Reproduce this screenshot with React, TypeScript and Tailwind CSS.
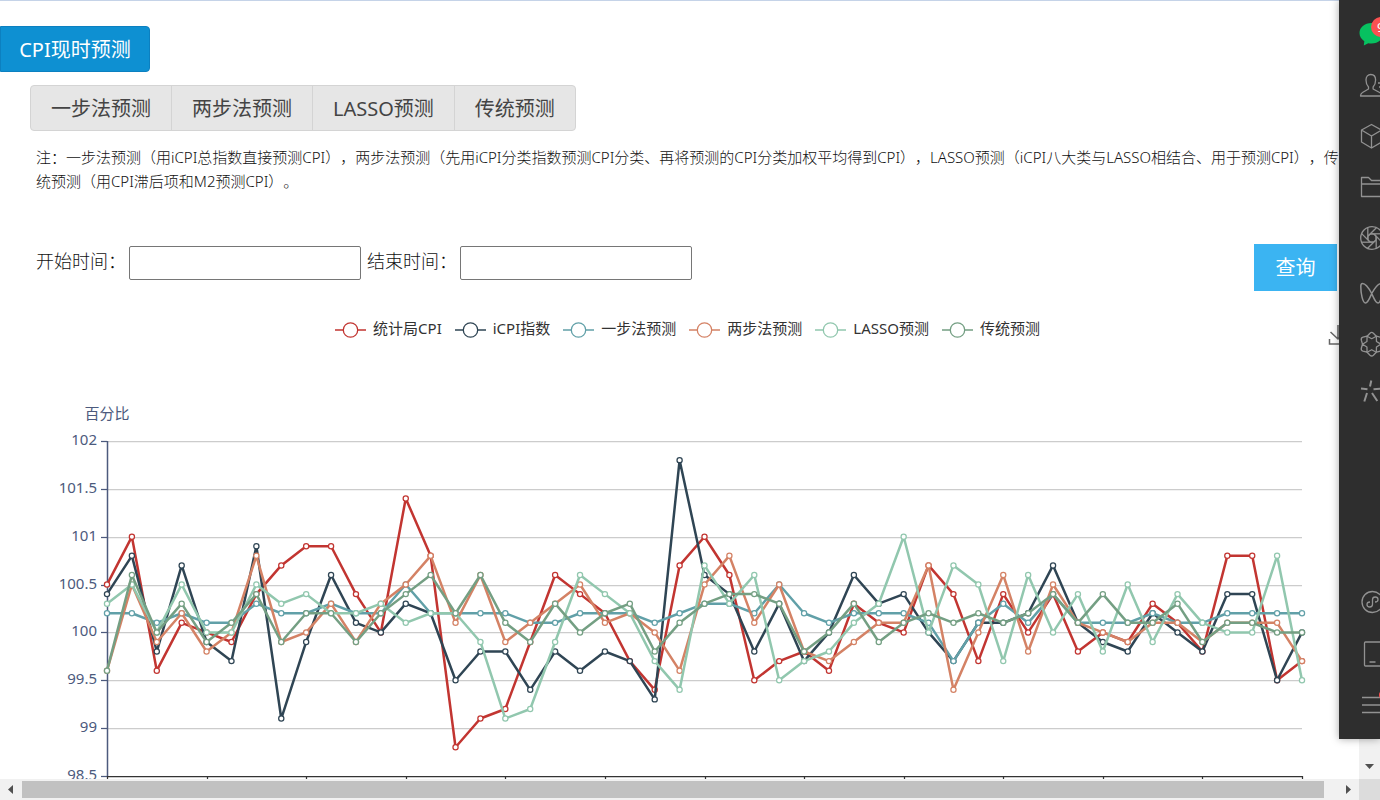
import { useState } from 'react'
import type { ReactNode } from 'react'

const series = [
  {
    name: '统计局CPI',
    color: '#c23531',
    data: [
      100.5, 101, 99.6, 100.1, 100, 99.9, 100.4, 100.7, 100.9, 100.9, 100.4, 100, 101.4, 100.8, 98.8, 99.1, 99.2,
      99.9, 100.6, 100.4, 100.2, 99.7, 99.4, 100.7, 101, 100.6, 99.5, 99.7, 99.8, 99.6, 100.3, 100.1, 100, 100.7,
      100.4, 99.7, 100.4, 100, 100.4, 99.8, 100, 99.9, 100.3, 100.1, 99.8, 100.8, 100.8, 99.5, 99.7,
    ],
  },
  {
    name: 'iCPI指数',
    color: '#2f4554',
    data: [
      100.4, 100.8, 99.8, 100.7, 99.9, 99.7, 100.9, 99.1, 99.9, 100.6, 100.1, 100, 100.3, 100.2, 99.5, 99.8, 99.8,
      99.4, 99.8, 99.6, 99.8, 99.7, 99.3, 101.8, 100.6, 100.4, 99.8, 100.3, 99.7, 100, 100.6, 100.3, 100.4, 100,
      99.7, 100.1, 100.1, 100.2, 100.7, 100.1, 99.9, 99.8, 100.2, 100, 99.8, 100.4, 100.4, 99.5, 100,
    ],
  },
  {
    name: '一步法预测',
    color: '#61a0a8',
    data: [
      100.2, 100.2, 100.1, 100.2, 100.1, 100.1, 100.3, 100.2, 100.2, 100.3, 100.2, 100.2, 100.5, 100.2, 100.2,
      100.2, 100.2, 100.1, 100.1, 100.2, 100.2, 100.2, 100.1, 100.2, 100.3, 100.3, 100.2, 100.5, 100.2, 100.1,
      100.2, 100.2, 100.2, 100.1, 99.7, 100.1, 100.3, 100.1, 100.4, 100.1, 100.1, 100.1, 100.2, 100.1, 100.1,
      100.2, 100.2, 100.2, 100.2,
    ],
  },
  {
    name: '两步法预测',
    color: '#d48265',
    data: [
      99.6, 100.5, 99.9, 100.2, 99.8, 100, 100.8, 99.9, 100, 100.3, 99.9, 100.3, 100.5, 100.8, 100.1, 100.6, 99.9,
      100.1, 100.3, 100.5, 100.1, 100.2, 100, 99.6, 100.5, 100.8, 100.1, 100.5, 99.8, 99.7, 99.9, 100.1, 100.1,
      100.7, 99.4, 100, 100.6, 99.8, 100.5, 100.1, 100, 99.9, 100.1, 100.1, 99.9, 100.1, 100.1, 100.1, 99.7,
    ],
  },
  {
    name: 'LASSO预测',
    color: '#91c7ae',
    data: [
      100.3, 100.5, 100, 100.5, 100, 100, 100.5, 100.3, 100.4, 100.2, 100.2, 100.3, 100.1, 100.2, 100.2, 99.9,
      99.1, 99.2, 99.9, 100.6, 100.4, 100.2, 99.7, 99.4, 100.7, 100.3, 100.6, 99.5, 99.7, 99.8, 100.1, 100.3, 101,
      100, 100.7, 100.5, 99.7, 100.6, 100, 100.4, 99.8, 100.5, 99.9, 100.4, 100.1, 100, 100, 100.8, 99.5,
    ],
  },
  {
    name: '传统预测',
    color: '#749f83',
    data: [
      99.6, 100.6, 100, 100.3, 99.9, 100.1, 100.4, 99.9, 100.2, 100.2, 99.9, 100.2, 100.4, 100.6, 100.2, 100.6,
      100.1, 99.9, 100.3, 100, 100.2, 100.3, 99.8, 100.1, 100.3, 100.4, 100.4, 100.3, 99.8, 100, 100.3, 99.9,
      100.1, 100.2, 100.1, 100.2, 100.1, 100.2, 100.4, 100.1, 100.4, 100.1, 100.1, 100.3, 99.9, 100.1, 100.1, 100,
      100,
    ],
  },
]

const yTicks = [102, 101.5, 101, 100.5, 100, 99.5, 99, 98.5]
const xTicks = [0, 4, 8, 12, 16, 20, 24, 28, 32, 36, 40, 44, 48]

const getX = (i: number) => 107 + (i * 1195) / 48
const getY = (v: number) => 91 + (102 - v) * 95.7

function LineChart() {
  return (
    <svg viewBox="0 0 1359 480" className="block w-full shrink-0" role="img" aria-label="CPI预测折线图">
      <text x="107" y="69" textAnchor="middle" fontSize="15" fill="#4c5a7d">
        百分比
      </text>
      {yTicks.map((v) => {
        const y = Math.round(getY(v)) + 0.5
        return (
          <g key={v}>
            {v > 98.5 && <path d={`M107 ${y}H1302`} stroke="#ccc" strokeWidth="1.25" />}
            <path d={`M101 ${y}H107`} stroke="#4c5a7d" strokeWidth="1.25" />
            <text x="97" y={y + 3.5} textAnchor="end" fontSize="15" fill="#4c5a7d">
              {v}
            </text>
          </g>
        )
      })}
      <path d="M107.5 91V426" stroke="#4c5a7d" strokeWidth="1.5" />
      <path d="M107 426.5H1302" stroke="#333" strokeWidth="1.25" />
      {xTicks.map((i) => (
        <path key={i} d={`M${Math.round(getX(i)) + 0.5} 426v6`} stroke="#333" strokeWidth="1.25" />
      ))}
      {series.map((s) => (
        <g key={s.name} stroke={s.color}>
          <polyline
            points={s.data.map((v, i) => `${getX(i)},${getY(v)}`).join(' ')}
            fill="none"
            strokeWidth="2.5"
            strokeLinejoin="bevel"
          />
          {s.data.map((v, i) => (
            <circle key={i} cx={getX(i)} cy={getY(v)} r="2.6" fill="#fff" strokeWidth="1.25" />
          ))}
        </g>
      ))}
    </svg>
  )
}

const sideTop: { label: string; icon: ReactNode }[] = [
  {
    label: '通讯录',
    icon: <path d="M8.5 14c-2-2-2.500-4-2.500-7 0-3.500 2-5.500 4.800-5.500s4.800 2 4.800 5.500c0 3-.5 5-2.500 7v2l6.500 3.500c1.500.8 2 2 2 3.500H.5c0-1.500.5-2.700 2-3.500L8.500 16zM18 10h6M19 14h5" />,
  },
  {
    label: '收藏',
    icon: <path d="M11.500.5l10 5.500v12l-10 6-10-6V6zM1.500 6l10 6 10-6M11.500 12v12" />,
  },
  {
    label: '文件',
    icon: <path d="M1.500 21.500v-19h7l3 3h13v16zM1.500 9h23" />,
  },
  {
    label: '朋友圈',
    icon: (
      <>
        <circle cx="12" cy="12" r="11.300" />
        <circle cx="12" cy="12" r="4.200" />
        {[0, 45, 90, 135, 180, 225, 270, 315].map((deg) => (
          <path key={deg} d="M11 7.800H22.400" transform={`rotate(${deg} 12 12)`} />
        ))}
      </>
    ),
  },
  {
    label: '视频号',
    icon: (
      <path
        strokeWidth="1.500"
        d="M2.500 6.500C5 6.500 8.500 10.500 11.700 16.500 14 21.500 15.500 26 18 26 21 26 22.600 16 22.600 9.500 22.600 7.500 22 6.500 21 6.500 18.500 6.500 15 10.500 11.700 16.500 9.500 21.500 8 26 5.500 26 2.500 26 .8 16 .8 9.500.8 7.500 1.300 6.500 2.500 6.500z"
      />
    ),
  },
  {
    label: '看一看',
    icon: (
      <>
        {[0, 60, 120, 180, 240, 300].map((deg) => (
          <path
            key={deg}
            d="M7.100 8.200L10 5.200q1.700-1.600 3.400 0L16.300 8.200 11.700 10.700z"
            transform={`rotate(${deg} 11.7 16.2)`}
          />
        ))}
      </>
    ),
  },
  {
    label: '搜一搜',
    icon: <path strokeWidth="2" d="M11.300 1.500l-1.300 6M1 9.500l6.500.8M13.500 10.300l8.500-.8M7 14l-2.700 8.500M12 14l5.300 8" />,
  },
]

const sideBottom: { label: string; icon: ReactNode }[] = [
  {
    label: '小程序',
    icon: (
      <>
        <circle cx="12.500" cy="11" r="10.500" />
        <path d="M10 11c-2 0-3 1-3 2.500S8.200 16 9.800 16s2.700-1.200 2.700-2.700V8.700C12.500 7.200 13.700 6 15.200 6S18 7 18 8.500 17 11 15 11" />
      </>
    ),
  },
  {
    label: '手机',
    icon: <path d="M5.500 0h15q1 0 1 1v22q0 1-1 1h-15q-1 0-1-1V1q0-1 1-1zM9.500 20h6" />,
  },
  {
    label: '更多',
    icon: (
      <>
        <path strokeWidth="1.600" d="M2 4.500h22M2 12h22M2 19.500h22" />
        <circle cx="23" cy="2" r="4" fill="#fa5151" stroke="none" />
      </>
    ),
  },
]

function SideButton({ label, children }: { label: string; children: ReactNode }) {
  return (
    <button aria-label={label} className="flex h-[51px] shrink-0 items-center">
      <svg
        viewBox="0 0 24 24"
        className="h-6 w-6 shrink-0 overflow-visible"
        fill="none"
        stroke="#929292"
        strokeWidth="1.300"
        strokeLinejoin="round"
      >
        {children}
      </svg>
    </button>
  )
}

function Sidebar() {
  return (
    <nav className="absolute top-0 right-0 flex h-[739px] w-[41px] flex-col justify-between overflow-hidden bg-[#2e2e2e] pt-2 pb-[9px] pl-[21px]">
      <div>
        <button aria-label="聊天" className="relative flex h-[51px] items-center">
          <svg viewBox="0 0 24 24" className="h-6 w-6 shrink-0 overflow-visible">
            <path
              d="M11.500 1C4.500 1-.5 5.500-.5 11c0 3.500 2 6.300 4.800 8.200L3.800 23.500l4.500-2.300c1 .3 2 .3 3.200.3 7 0 12-4.500 12-10.500S18.500 1 11.500 1z"
              fill="#07c160"
            />
          </svg>
          <span className="absolute top-[9px] left-[11px] h-5 w-5 rounded-full bg-[#fa5151] pl-[6px] text-left text-[13px] leading-5 text-white">
            9
          </span>
        </button>
        {sideTop.map((item) => (
          <SideButton key={item.label} label={item.label}>
            {item.icon}
          </SideButton>
        ))}
      </div>
      <div>
        {sideBottom.map((item) => (
          <SideButton key={item.label} label={item.label}>
            {item.icon}
          </SideButton>
        ))}
      </div>
    </nav>
  )
}

export default function App() {
  const [start, setStart] = useState('')
  const [end, setEnd] = useState('')

  return (
    <div className="relative flex h-screen flex-col overflow-hidden bg-white font-['Noto_Sans','Noto_Sans_CJK_SC',sans-serif] text-[#333] [text-spacing-trim:space-all]">
      <div className="flex min-h-0 flex-1">
        <main className="flex min-w-0 flex-1 flex-col overflow-hidden border-t border-[#c5d3e8] pt-[25px]">
          <button className="h-[46px] w-[150px] shrink-0 self-start rounded-r-sm border border-[#0c80c0] bg-[#0e90d2] pt-[2px] text-xl text-white">
            CPI现时预测
          </button>

          <div className="mt-[13px] ml-[30px] flex h-[46px] shrink-0 self-start rounded-sm border border-[#d4d4d4] bg-[#e6e6e6] text-xl text-[#444]">
            <button className="border-r border-[#d4d4d4] px-5 pt-[2px]">一步法预测</button>
            <button className="border-r border-[#d4d4d4] px-5 pt-[2px]">两步法预测</button>
            <button className="border-r border-[#d4d4d4] px-5 pt-[2px]">LASSO预测</button>
            <button className="px-5 pt-[2px]">传统预测</button>
          </div>

          <p className="mt-[14px] shrink-0 pr-4 pl-9 text-[15px] leading-6 font-light text-[#111]">
            注：一步法预测（用iCPI总指数直接预测CPI），两步法预测（先用iCPI分类指数预测CPI分类、再将预测的CPI分类加权平均得到CPI），LASSO预测（iCPI八大类与LASSO相结合、用于预测CPI），传统预测（用CPI滞后项和M2预测CPI）。
          </p>

          <form className="mt-[51px] flex shrink-0 items-start pr-[22px] pl-9 text-lg" onSubmit={(e) => e.preventDefault()}>
            <label htmlFor="start" className="w-[93px] leading-[34px] font-light text-[#111]">
              开始时间：
            </label>
            <input
              id="start"
              value={start}
              onChange={(e) => setStart(e.target.value)}
              className="mt-[2px] h-[34px] w-[232px] rounded-xs border border-[#767676] px-2"
            />
            <label htmlFor="end" className="ml-[6px] w-[93px] leading-[34px] font-light text-[#111]">
              结束时间：
            </label>
            <input
              id="end"
              value={end}
              onChange={(e) => setEnd(e.target.value)}
              className="mt-[2px] h-[34px] w-[232px] rounded-xs border border-[#767676] px-2"
            />
            <button type="submit" className="ml-auto h-[47px] w-[83px] bg-[#3bb4f2] text-xl text-white">
              查询
            </button>
          </form>

          <div className="mt-[25px] flex h-[34px] shrink-0 items-start pr-[11px] pl-[47px]">
            <div className="flex flex-1 justify-center gap-[13px] text-[15px] leading-6">
              {series.map((s) => (
                <button key={s.name} className="flex items-center gap-[7px]">
                  <svg viewBox="0 0 31 24" className="h-6 w-[31px]" fill="none" stroke={s.color} strokeWidth="1.300">
                    <path d="M0 14h8M23 14h8" />
                    <circle cx="15.500" cy="14" r="7.200" />
                  </svg>
                  {s.name}
                </button>
              ))}
            </div>
            <button aria-label="下载" className="mt-2">
              <svg viewBox="0 0 20 22" className="h-[22px] w-5" fill="none" stroke="#666" strokeWidth="1.500">
                <path d="M1.500 15v5h17v-5M10 1v14M2.500 8l7.500 7 7.500-7" />
              </svg>
            </button>
          </div>

          <LineChart />
        </main>

        <div className="flex w-[21px] shrink-0 flex-col justify-end bg-[#f1f1f1] pb-2">
          <svg viewBox="0 0 21 8" className="h-2 w-[21px]" fill="#505050">
            <path d="M6 1h9l-4.500 5z" />
          </svg>
        </div>
      </div>

      <div className="flex h-[21px] shrink-0 bg-[#f1f1f1]">
        <svg viewBox="0 0 22 21" className="h-[21px] w-[22px] shrink-0" fill="#505050">
          <path d="M13 6v9l-5-4.500z" />
        </svg>
        <div className="my-[2px] flex-1 bg-[#c1c1c1]" />
        <svg viewBox="0 0 35 21" className="h-[21px] w-[35px] shrink-0" fill="#505050">
          <path d="M22 6v9l5-4.500z" />
        </svg>
        <div className="w-[21px] shrink-0 bg-[#dcdcdc]" />
      </div>

      <div className="absolute top-0 right-0 h-[739px] w-[41px] shadow-[0_0_8px_rgba(0,0,0,0.35)]" />
      <Sidebar />
    </div>
  )
}
